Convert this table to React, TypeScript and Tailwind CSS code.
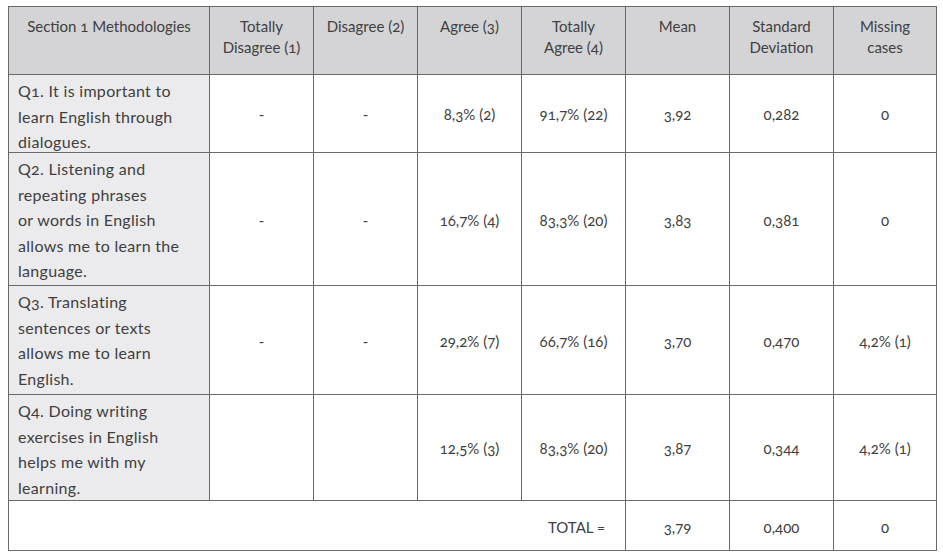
const headers = [
  ["Section 1 Methodologies"],
  ["Totally", "Disagree (1)"],
  ["Disagree (2)"],
  ["Agree (3)"],
  ["Totally", "Agree (4)"],
  ["Mean"],
  ["Standard", "Deviation"],
  ["Missing", "cases"],
];

const rows = [
  {
    q: ["Q1. It is important to", "learn English through", "dialogues."],
    h: "h-[78px]",
    inner: "h-[77px]",
    cells: ["-", "-", "8,3% (2)", "91,7% (22)", "3,92", "0,282", "0"],
  },
  {
    q: [
      "Q2. Listening and",
      "repeating phrases",
      "or words in English",
      "allows me to learn the",
      "language.",
    ],
    h: "h-[133px]",
    inner: "h-[132px]",
    cells: ["-", "-", "16,7% (4)", "83,3% (20)", "3,83", "0,381", "0"],
  },
  {
    q: ["Q3. Translating", "sentences or texts", "allows me to learn", "English."],
    h: "h-[109px]",
    inner: "h-[108px]",
    cells: ["-", "-", "29,2% (7)", "66,7% (16)", "3,70", "0,470", "4,2% (1)"],
  },
  {
    q: ["Q4. Doing writing", "exercises in English", "helps me with my", "learning."],
    h: "h-[106px]",
    inner: "h-[105px]",
    cells: ["", "", "12,5% (3)", "83,3% (20)", "3,87", "0,344", "4,2% (1)"],
  },
];

const widths = ["w-[201px]", "w-[104px]", "w-[104px]", "w-[104px]", "w-[104px]", "w-[104px]", "w-[104px]", "w-[103px]"];

export default function App() {
  return (
    <div className="w-[943px] h-[558px] bg-white pt-[6px] pl-[8px] font-['Lato',sans-serif] text-[#404040]">
      <table className="table-fixed border-collapse w-[928px] oldstyle-nums">
        <colgroup>
          {widths.map((w, i) => (
            <col key={i} className={w} />
          ))}
        </colgroup>
        <thead>
          <tr className="h-[68px] bg-[#d4d4d6]">
            {headers.map((lines, i) => (
              <th
                key={i}
                className="border border-[#6a6a6a] align-top text-center font-normal text-[15px] leading-[21px] pt-[9px] px-1"
              >
                {lines.map((l, j) => (
                  <div key={j}>{l}</div>
                ))}
              </th>
            ))}
          </tr>
        </thead>
        <tbody>
          {rows.map((r, i) => (
            <tr key={i} className={r.h}>
              <td className="border border-[#6a6a6a] bg-[#ebebed] align-top p-0">
                <div className={`${r.inner} overflow-visible pt-[3px] pl-[9px] text-left text-[16px] leading-[25.5px] tracking-[0.3px]`}>
                  {r.q.map((l, j) => (
                    <div key={j} className="whitespace-nowrap">
                      {l}
                    </div>
                  ))}
                </div>
              </td>
              {r.cells.map((c, j) => (
                <td
                  key={j}
                  className="border border-[#6a6a6a] text-center align-middle text-[15px] pt-[2px]"
                >
                  {c}
                </td>
              ))}
            </tr>
          ))}
          <tr className="h-[50px]">
            <td
              colSpan={5}
              className="border border-[#6a6a6a] text-right align-middle text-[15px] pr-[20px] pt-[4px]"
            >
              TOTAL =
            </td>
            <td className="border border-[#6a6a6a] text-center align-middle text-[15px] pt-[4px]">3,79</td>
            <td className="border border-[#6a6a6a] text-center align-middle text-[15px] pt-[4px]">0,400</td>
            <td className="border border-[#6a6a6a] text-center align-middle text-[15px] pt-[4px]">0</td>
          </tr>
        </tbody>
      </table>
    </div>
  );
}
